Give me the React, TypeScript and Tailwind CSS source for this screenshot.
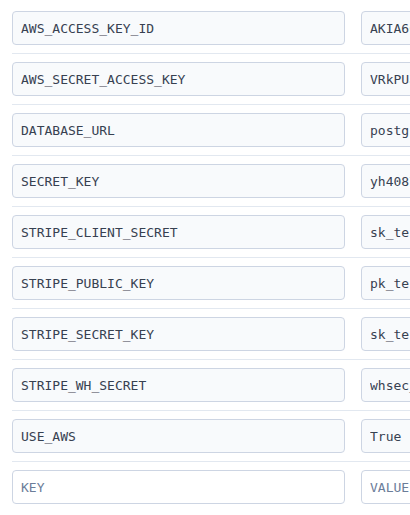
import React from "react";

const rows: [string, string][] = [
  ["AWS_ACCESS_KEY_ID", "AKIA6CQ3XZ7VJ4N2KLPM"],
  ["AWS_SECRET_ACCESS_KEY", "VRkPUa8s9dF3kLmN2pQrT"],
  ["DATABASE_URL", "postgres://user:pass@host"],
  ["SECRET_KEY", "yh4087xk2m9q"],
  ["STRIPE_CLIENT_SECRET", "sk_test_51H"],
  ["STRIPE_PUBLIC_KEY", "pk_test_51H"],
  ["STRIPE_SECRET_KEY", "sk_test_51H"],
  ["STRIPE_WH_SECRET", "whsec_8Kd2"],
  ["USE_AWS", "True"],
];

const mono = { fontFamily: '"DejaVu Sans Mono", "Liberation Mono", monospace' };

export default function App() {
  return (
    <div className="w-[410px] h-[515px] overflow-hidden bg-white">
      <div className="w-[720px] pl-3 pt-[3px]">
        {rows.map(([k, v]) => (
          <div key={k} className="flex gap-4 py-2 border-b border-[#e2e8f0]">
            <input
              readOnly
              value={k}
              style={mono}
              className="w-[333px] h-[34px] px-2 rounded border border-[#cdd5e3] bg-[#f8fafc] text-[13px] text-[#374151] outline-none"
            />
            <input
              readOnly
              value={v}
              style={mono}
              className="w-[333px] h-[34px] px-2 rounded border border-[#cdd5e3] bg-[#f8fafc] text-[13px] text-[#374151] outline-none"
            />
          </div>
        ))}
        <div className="flex gap-4 py-2">
          <input
            placeholder="KEY"
            style={mono}
            className="w-[333px] h-[34px] px-2 rounded border border-[#cdd5e3] bg-white text-[13px] text-[#374151] placeholder:text-[#6b7d99] outline-none"
          />
          <input
            placeholder="VALUE"
            style={mono}
            className="w-[333px] h-[34px] px-2 rounded border border-[#cdd5e3] bg-white text-[13px] text-[#374151] placeholder:text-[#6b7d99] outline-none"
          />
        </div>
      </div>
    </div>
  );
}
